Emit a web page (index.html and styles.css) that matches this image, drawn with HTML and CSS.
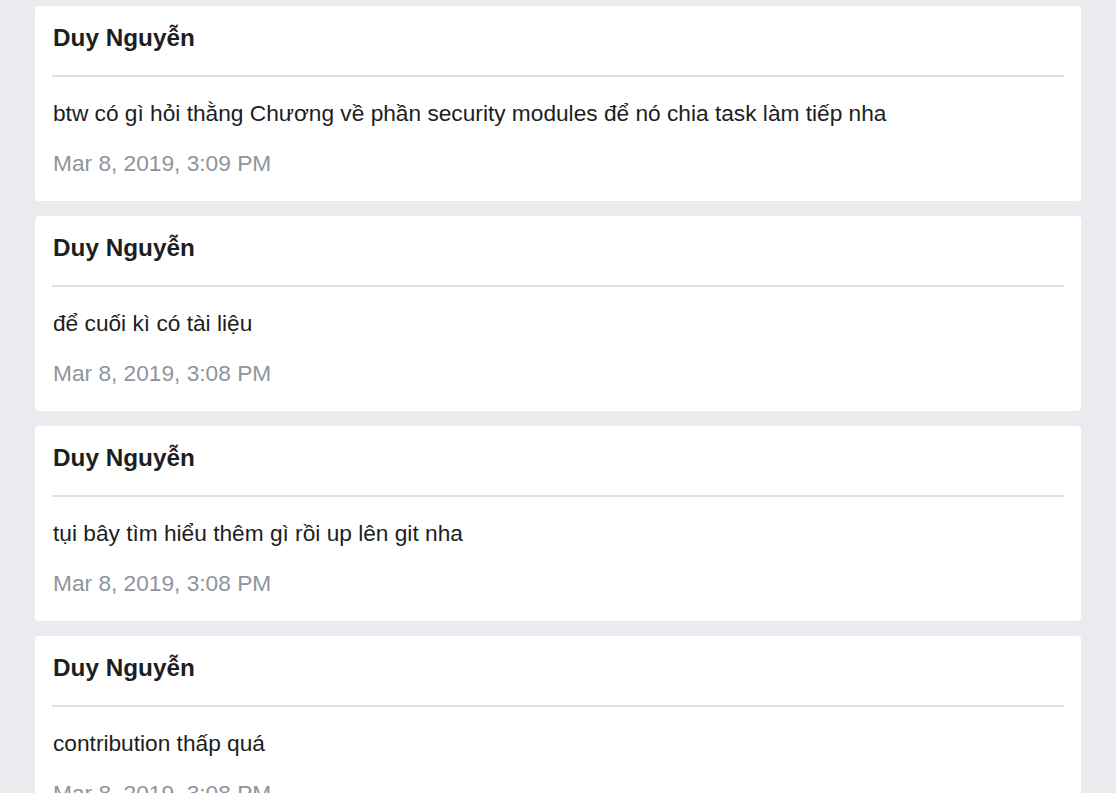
FILE: index.html
```html
<!DOCTYPE html>
<html lang="vi">
<head>
<meta charset="utf-8">
<title>Messages</title>
<link rel="stylesheet" href="styles.css">
</head>
<body>
<main class="feed">
  <article class="card">
    <h2 class="author">Duy Nguyễn</h2>
    <hr class="sep">
    <p class="msg">btw có gì hỏi thằng Chương về phần security modules để nó chia task làm tiếp nha</p>
    <p class="time">Mar 8, 2019, 3:09 PM</p>
  </article>
  <article class="card">
    <h2 class="author">Duy Nguyễn</h2>
    <hr class="sep">
    <p class="msg">để cuối kì có tài liệu</p>
    <p class="time">Mar 8, 2019, 3:08 PM</p>
  </article>
  <article class="card">
    <h2 class="author">Duy Nguyễn</h2>
    <hr class="sep">
    <p class="msg">tụi bây tìm hiểu thêm gì rồi up lên git nha</p>
    <p class="time">Mar 8, 2019, 3:08 PM</p>
  </article>
  <article class="card">
    <h2 class="author">Duy Nguyễn</h2>
    <hr class="sep">
    <p class="msg">contribution thấp quá</p>
    <p class="time">Mar 8, 2019, 3:08 PM</p>
  </article>
</main>
</body>
</html>
```

FILE: styles.css
```css
html, body {
  margin: 0;
  padding: 0;
  background: #e9ebee;
  font-family: "Liberation Sans", Arial, sans-serif;
  color: #1c1e21;
}

.feed {
  display: flex;
  flex-direction: column;
  gap: 15px;
  padding: 6px 35px 20px;
}

.card {
  background: #ffffff;
  border-radius: 4px;
  padding: 18px 17px 25px 18px;
}

.author {
  margin: 0;
  font-size: 24.3px;
  font-weight: bold;
  line-height: 28px;
  color: #1c1e21;
}

.sep {
  border: 0;
  height: 2px;
  background: #dddfe2;
  margin: 23px 0 24px -1px;
}

.msg {
  margin: 0;
  font-size: 22.7px;
  line-height: 25px;
  color: #1c1e21;
}

.time {
  margin: 25px 0 0;
  font-size: 22.7px;
  line-height: 25px;
  color: #90949c;
}
```
